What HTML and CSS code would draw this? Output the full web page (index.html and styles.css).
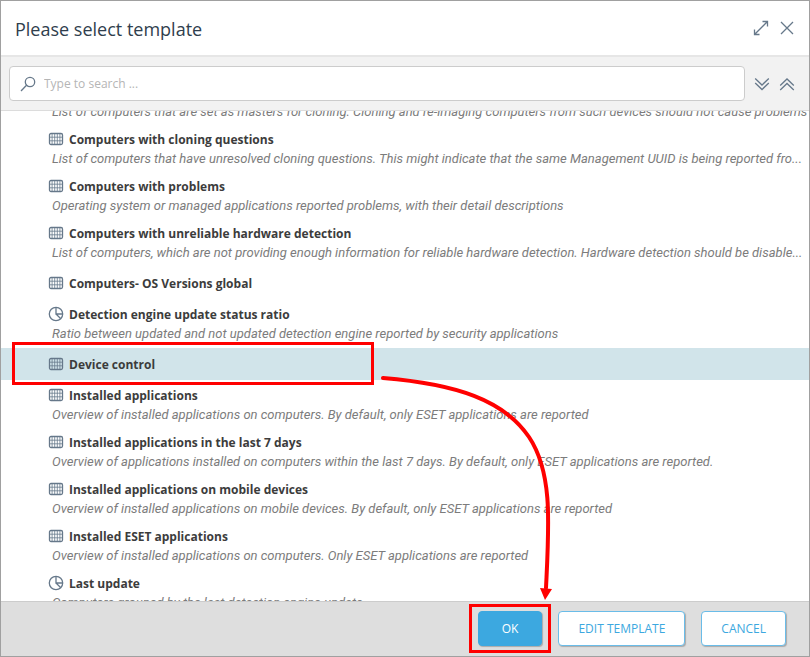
FILE: index.html
```html
<!DOCTYPE html>
<html lang="en">

<head>
	<meta charset="utf-8">
	<title>Please select template</title>
	<link rel="stylesheet" href="styles.css">
</head>

<body>

	<!-- shared icons -->
	<svg class="sprite" width="0" height="0">
		<symbol id="icoTable" viewBox="0 0 16 16">
			<rect x="1.5" y="2.5" width="13" height="11" rx="1.5"/>
			<path stroke-width="0.8" d="M1.5 6.2h13M1.5 9.8h13M4.1 2.5v11M6.7 2.5v11M9.3 2.5v11M11.9 2.5v11"/>
		</symbol>
		<symbol id="icoPie" viewBox="0 0 16 16">
			<circle cx="8" cy="8" r="6.7"/>
			<path d="M8 1.3V8h6.7M8 8l4.8 4.8"/>
		</symbol>
	</svg>

	<div class="dialog">
		<div class="header">
			<h1>Please select template</h1>
			<button class="btnIcon" title="Maximize">
				<svg width="16" height="16" viewBox="0 0 16 16"><path d="M1.5 14.5l13-13M9.5 1.5h5v5M1.5 9.5v5h5"/></svg>
			</button>
			<button class="btnIcon" title="Close">
				<svg width="16" height="16" viewBox="0 0 16 16"><path d="M2 2l12 12M14 2L2 14"/></svg>
			</button>
		</div>

		<div class="toolbar">
			<div class="search">
				<svg width="16" height="16" viewBox="0 0 16 16"><circle cx="10" cy="6" r="4.7"/><path d="M6.5 9.3L1 15"/></svg>
				<input type="search" id="txtSearch" aria-label="Search" placeholder="Type to search ...">
			</div>
			<button class="btnIcon" title="Expand all">
				<svg width="16" height="16" viewBox="0 0 16 16"><path d="M1.2 2.5L8 9l6.8-6.5M1.2 7L8 13.5 14.8 7"/></svg>
			</button>
			<button class="btnIcon" title="Collapse all">
				<svg width="16" height="16" viewBox="0 0 16 16"><path d="M1.2 9.5L8 3l6.8 6.5M1.2 14L8 7.5l6.8 6.5"/></svg>
			</button>
		</div>

		<div class="content">
			<ul class="list">
				<li>
					<h2></h2>
					<p>List of computers that are set as masters for cloning. Cloning and re-imaging computers from such devices should not cause problems</p>
				</li>
				<li>
					<h2><svg class="ico"><use href="#icoTable"/></svg>Computers with cloning questions</h2>
					<p>List of computers that have unresolved cloning questions. This might indicate that the same Management UUID is being reported fro...</p>
				</li>
				<li>
					<h2><svg class="ico"><use href="#icoTable"/></svg>Computers with problems</h2>
					<p>Operating system or managed applications reported problems, with their detail descriptions</p>
				</li>
				<li>
					<h2><svg class="ico"><use href="#icoTable"/></svg>Computers with unreliable hardware detection</h2>
					<p>List of computers, which are not providing enough information for reliable hardware detection. Hardware detection should be disable...</p>
				</li>
				<li class="single">
					<h2><svg class="ico"><use href="#icoTable"/></svg>Computers- OS Versions global</h2>
				</li>
				<li>
					<h2><svg class="ico"><use href="#icoPie"/></svg>Detection engine update status ratio</h2>
					<p>Ratio between updated and not updated detection engine reported by security applications</p>
				</li>
				<li class="single selected">
					<h2><svg class="ico"><use href="#icoTable"/></svg>Device control</h2>
					<span class="mark markRow"></span>
				</li>
				<li>
					<h2><svg class="ico"><use href="#icoTable"/></svg>Installed applications</h2>
					<p>Overview of installed applications on computers. By default, only ESET applications are reported</p>
				</li>
				<li>
					<h2><svg class="ico"><use href="#icoTable"/></svg>Installed applications in the last 7 days</h2>
					<p>Overview of applications installed on computers within the last 7 days. By default, only ESET applications are reported.</p>
				</li>
				<li>
					<h2><svg class="ico"><use href="#icoTable"/></svg>Installed applications on mobile devices</h2>
					<p>Overview of installed applications on mobile devices. By default, only ESET applications are reported</p>
				</li>
				<li>
					<h2><svg class="ico"><use href="#icoTable"/></svg>Installed ESET applications</h2>
					<p>Overview of installed applications on computers. Only ESET applications are reported</p>
				</li>
				<li>
					<h2><svg class="ico"><use href="#icoPie"/></svg>Last update</h2>
					<p>Computers grouped by the last detection engine update</p>
				</li>
			</ul>
		</div>

		<div class="footer">
			<div class="okWrap">
				<button class="btn primary">OK</button>
				<span class="mark markOk"></span>
			</div>
			<button class="btn">EDIT TEMPLATE</button>
			<button class="btn">CANCEL</button>
		</div>

		<!-- arrow from the selected row to OK -->
		<svg class="arrow" width="176" height="230" viewBox="0 0 176 230">
			<path class="line" d="M7 7C80 13 128 29 153 66C177 102 173 153 170 217"/>
			<path class="head" d="M164 217l12 1-7 11z"/>
		</svg>
	</div>

</body>

</html>
```
FILE: styles.css
```css
* {
	box-sizing: border-box;
}

html, body {
	margin: 0;
	height: 100%;
	font-family: 'Open Sans', sans-serif;
	font-size: 12px;
	color: #333;
}

h1, h2, p, ul {
	margin: 0;
	padding: 0;
}

svg {
	fill: none;
	stroke: #66788a;
	stroke-width: 1.3;
}

.sprite {
	position: absolute;
}

.dialog {
	position: relative;
	display: flex;
	flex-direction: column;
	height: 100vh;
	border: 1px solid #a0a0a0;
	background: #fff;
}

.header {
	display: flex;
	align-items: center;
	gap: 10px;
	height: 54px;
	padding: 0 14px;
}
.header h1 {
	flex: 1;
	padding-top: 2px;
	font-size: 18px;
	font-weight: 400;
	color: #2f3e4d;
}

.btnIcon {
	display: flex;
	padding: 0;
	border: 0;
	background: none;
}

.toolbar {
	display: flex;
	align-items: center;
	gap: 9px;
	height: 56px;
	padding: 0 14px 0 8px;
	background: #f2f2f2;
	border-top: 2px solid #e6e6e6;
	border-bottom: 1px solid #dcdcdc;
}

.search {
	flex: 1;
	display: flex;
	align-items: center;
	gap: 8px;
	height: 35px;
	padding: 0 10px;
	background: #fff;
	border: 1px solid #ccc;
	border-radius: 4px;
}
.search input {
	flex: 1;
	padding: 0;
	border: 0;
	outline: none;
	font: inherit;
	background: none;
}
.search input::placeholder {
	color: #b5b5b5;
}

.content {
	flex: 1;
	min-height: 0;
	overflow: hidden;
}

/* list is scrolled down a little */
.list {
	margin-top: -34px;
	list-style: none;
}
.list li {
	position: relative;
	height: 47px;
	padding: 5px 4px 0 47px;
}
.list li.single {
	height: 32px;
	margin-top: 2px;
	padding-top: 6px;
}
.list h2 {
	display: flex;
	align-items: center;
	gap: 5px;
	height: 20px;
	font-size: 12px;
	font-weight: 700;
	color: #3c3c3c;
}
.list p {
	padding-left: 4px;
	line-height: 20px;
	font-family: Roboto, sans-serif;
	font-size: 13px;
	font-style: italic;
	color: #7c7c7c;
	white-space: nowrap;
}
.list .selected {
	background: #d1e4ea;
}

.ico {
	width: 16px;
	height: 16px;
}

.footer {
	display: flex;
	align-items: center;
	justify-content: flex-end;
	gap: 16px;
	height: 55px;
	padding: 0 23px 2px 0;
	background: #dedede;
	border-top: 1px solid #ccc;
}

.okWrap {
	position: relative;
}

.btn {
	height: 35px;
	padding: 0 19px;
	font: inherit;
	color: #3ca8e0;
	background: #fff;
	border: 1px solid #6abce8;
	border-radius: 4px;
	box-shadow: 1px 1px 1px #aaa;
}
.primary {
	padding: 0 23px;
	color: #fff;
	background: #3ca8e0;
	border-color: #3ca8e0;
}

/* red marks */
.mark {
	position: absolute;
	border: 3px solid #f00;
}
.markRow {
	top: -6px;
	left: 11px;
	width: 362px;
	height: 43px;
}
.markOk {
	top: -7px;
	right: -9px;
	bottom: -7px;
	left: -9px;
}

.arrow {
	position: absolute;
	top: 370px;
	left: 375px;
}
.arrow .line {
	stroke: #f00;
	stroke-width: 4;
	stroke-linecap: round;
}
.arrow .head {
	fill: #f00;
	stroke: none;
}
```
